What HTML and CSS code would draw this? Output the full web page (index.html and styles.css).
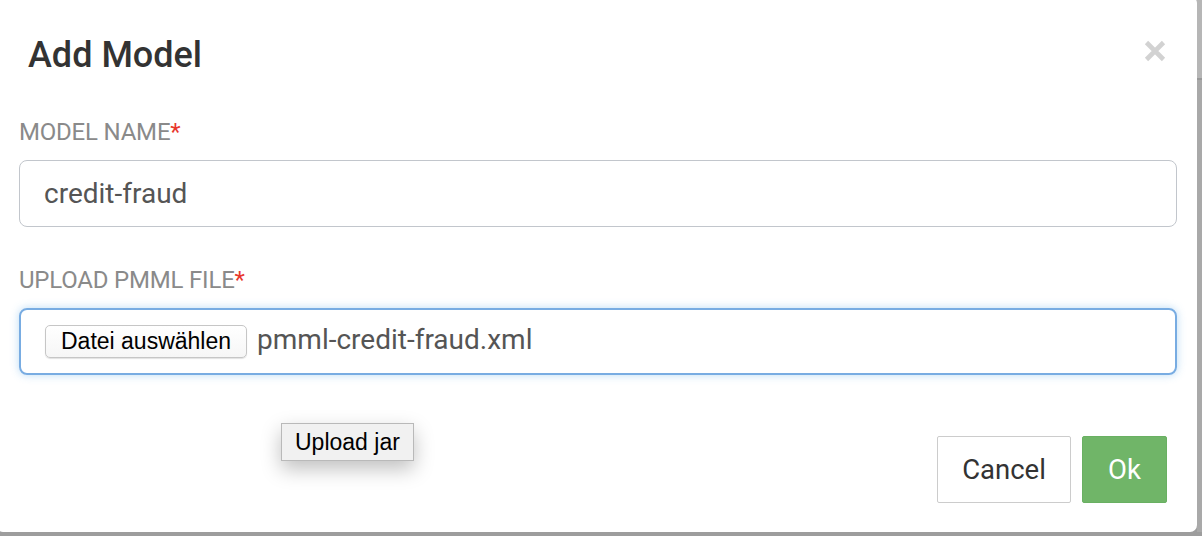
FILE: index.html
```html
<!DOCTYPE html>
<html lang="de">
<head>
<meta charset="utf-8">
<title>Add Model</title>
<link rel="stylesheet" href="styles.css">
</head>
<body>
<div class="backdrop">
  <div class="dialog">
    <div class="dialog-header">
      <h1 class="dialog-title">Add Model</h1>
      <button class="close" type="button" aria-label="Close">
        <svg width="22" height="22" viewBox="0 0 22 22"><path d="M2.5 2.5 L19.5 19.5 M19.5 2.5 L2.5 19.5" stroke="#d2d2d2" stroke-width="4.6" stroke-linecap="butt"/></svg>
      </button>
    </div>
    <div class="dialog-body">
      <div class="field">
        <label class="field-label">MODEL NAME<span class="req">*</span></label>
        <div class="input">credit-fraud</div>
      </div>
      <div class="field">
        <label class="field-label">UPLOAD PMML FILE<span class="req">*</span></label>
        <div class="input input-focus">
          <span class="file-btn">Datei auswählen</span>
          <span class="file-name">pmml-credit-fraud.xml</span>
        </div>
      </div>
    </div>
    <div class="dialog-footer">
      <button class="btn btn-default" type="button">Cancel</button>
      <button class="btn btn-ok" type="button">Ok</button>
    </div>
    <div class="tooltip">Upload jar</div>
  </div>
  <div class="side-strip">
    <div class="strip-top"></div>
  </div>
</div>
</body>
</html>
```

FILE: styles.css
```css
* { box-sizing: border-box; }
html, body { margin: 0; padding: 0; }
body {
  width: 1202px;
  height: 536px;
  overflow: hidden;
  background: #9d9d9d;
  font-family: Roboto, "Liberation Sans", sans-serif;
}
.backdrop {
  display: flex;
  align-items: flex-start;
  height: 536px;
}
.dialog {
  position: relative;
  flex: none;
  width: 1201px;
  height: 536px;
  margin: -4px 0 0 -4px;
  background: #fff;
  border-radius: 7px;
  display: flex;
  flex-direction: column;
}
.side-strip {
  flex: 1;
  height: 532px;
  background: #a9a9a9;
  display: flex;
  flex-direction: column;
}
.strip-top {
  height: 80px;
  background: #b6b6b6;
  border-bottom: 2px solid #999;
}
.dialog-header {
  display: flex;
  justify-content: space-between;
  align-items: flex-start;
  padding: 38px 31px 0 32px;
}
.dialog-title {
  margin: 0;
  font-family: Roboto, sans-serif;
  font-weight: 500;
  font-size: 36px;
  line-height: 42px;
  color: #333;
}
.close {
  margin-top: 6px;
  padding: 0;
  border: 0;
  background: none;
  width: 22px;
  height: 22px;
  display: flex;
}
.dialog-body {
  padding: 42px 20px 0 23px;
  display: flex;
  flex-direction: column;
  gap: 39px;
}
.field {
  display: flex;
  flex-direction: column;
  gap: 14px;
}
.field-label {
  font-size: 24px;
  line-height: 28px;
  font-weight: 400;
  color: #8a8a8a;
  letter-spacing: -0.2px;
}
.req { color: #e8372c; }
.input {
  height: 67px;
  border: 1.5px solid #c2c6cc;
  border-radius: 8px;
  padding: 0 24px;
  display: flex;
  align-items: center;
  font-size: 28px;
  color: #555;
}
.input-focus {
  border: 2px solid #78ace2;
  box-shadow: 0 0 8px rgba(102, 175, 233, 0.45);
  padding-left: 24px;
}
.file-btn {
  height: 33px;
  padding: 0 15px;
  display: flex;
  align-items: center;
  border: 1px solid #c6c6c6;
  border-radius: 5px;
  background: linear-gradient(#ffffff, #f6f6f6);
  box-shadow: 0 1px 1px rgba(0, 0, 0, 0.12);
  font-family: "Liberation Sans", Arial, sans-serif;
  font-size: 23px;
  color: #000;
}
.file-name {
  margin-left: 10px;
  margin-top: -4px;
  font-size: 28px;
  color: #555;
}
.dialog-footer {
  margin-top: auto;
  padding: 0 30px 29px 0;
  display: flex;
  justify-content: flex-end;
  gap: 11px;
}
.btn {
  height: 67px;
  font-family: Roboto, sans-serif;
  font-size: 27.5px;
  border-radius: 2px;
  cursor: pointer;
}
.btn-default {
  width: 134px;
  background: #fff;
  border: 1.5px solid #cccccc;
  color: #333;
}
.btn-ok {
  width: 85px;
  background: #70b568;
  border: 1px solid #69b062;
  color: #fff;
}
.tooltip {
  position: absolute;
  left: 285px;
  top: 427px;
  height: 38px;
  padding: 0 13px;
  display: flex;
  align-items: center;
  background: #f1f1f1;
  border: 1px solid #b9b9b9;
  box-shadow: 0 8px 20px rgba(0, 0, 0, 0.25);
  font-family: "Liberation Sans", Arial, sans-serif;
  font-size: 23px;
  color: #000;
}
```
